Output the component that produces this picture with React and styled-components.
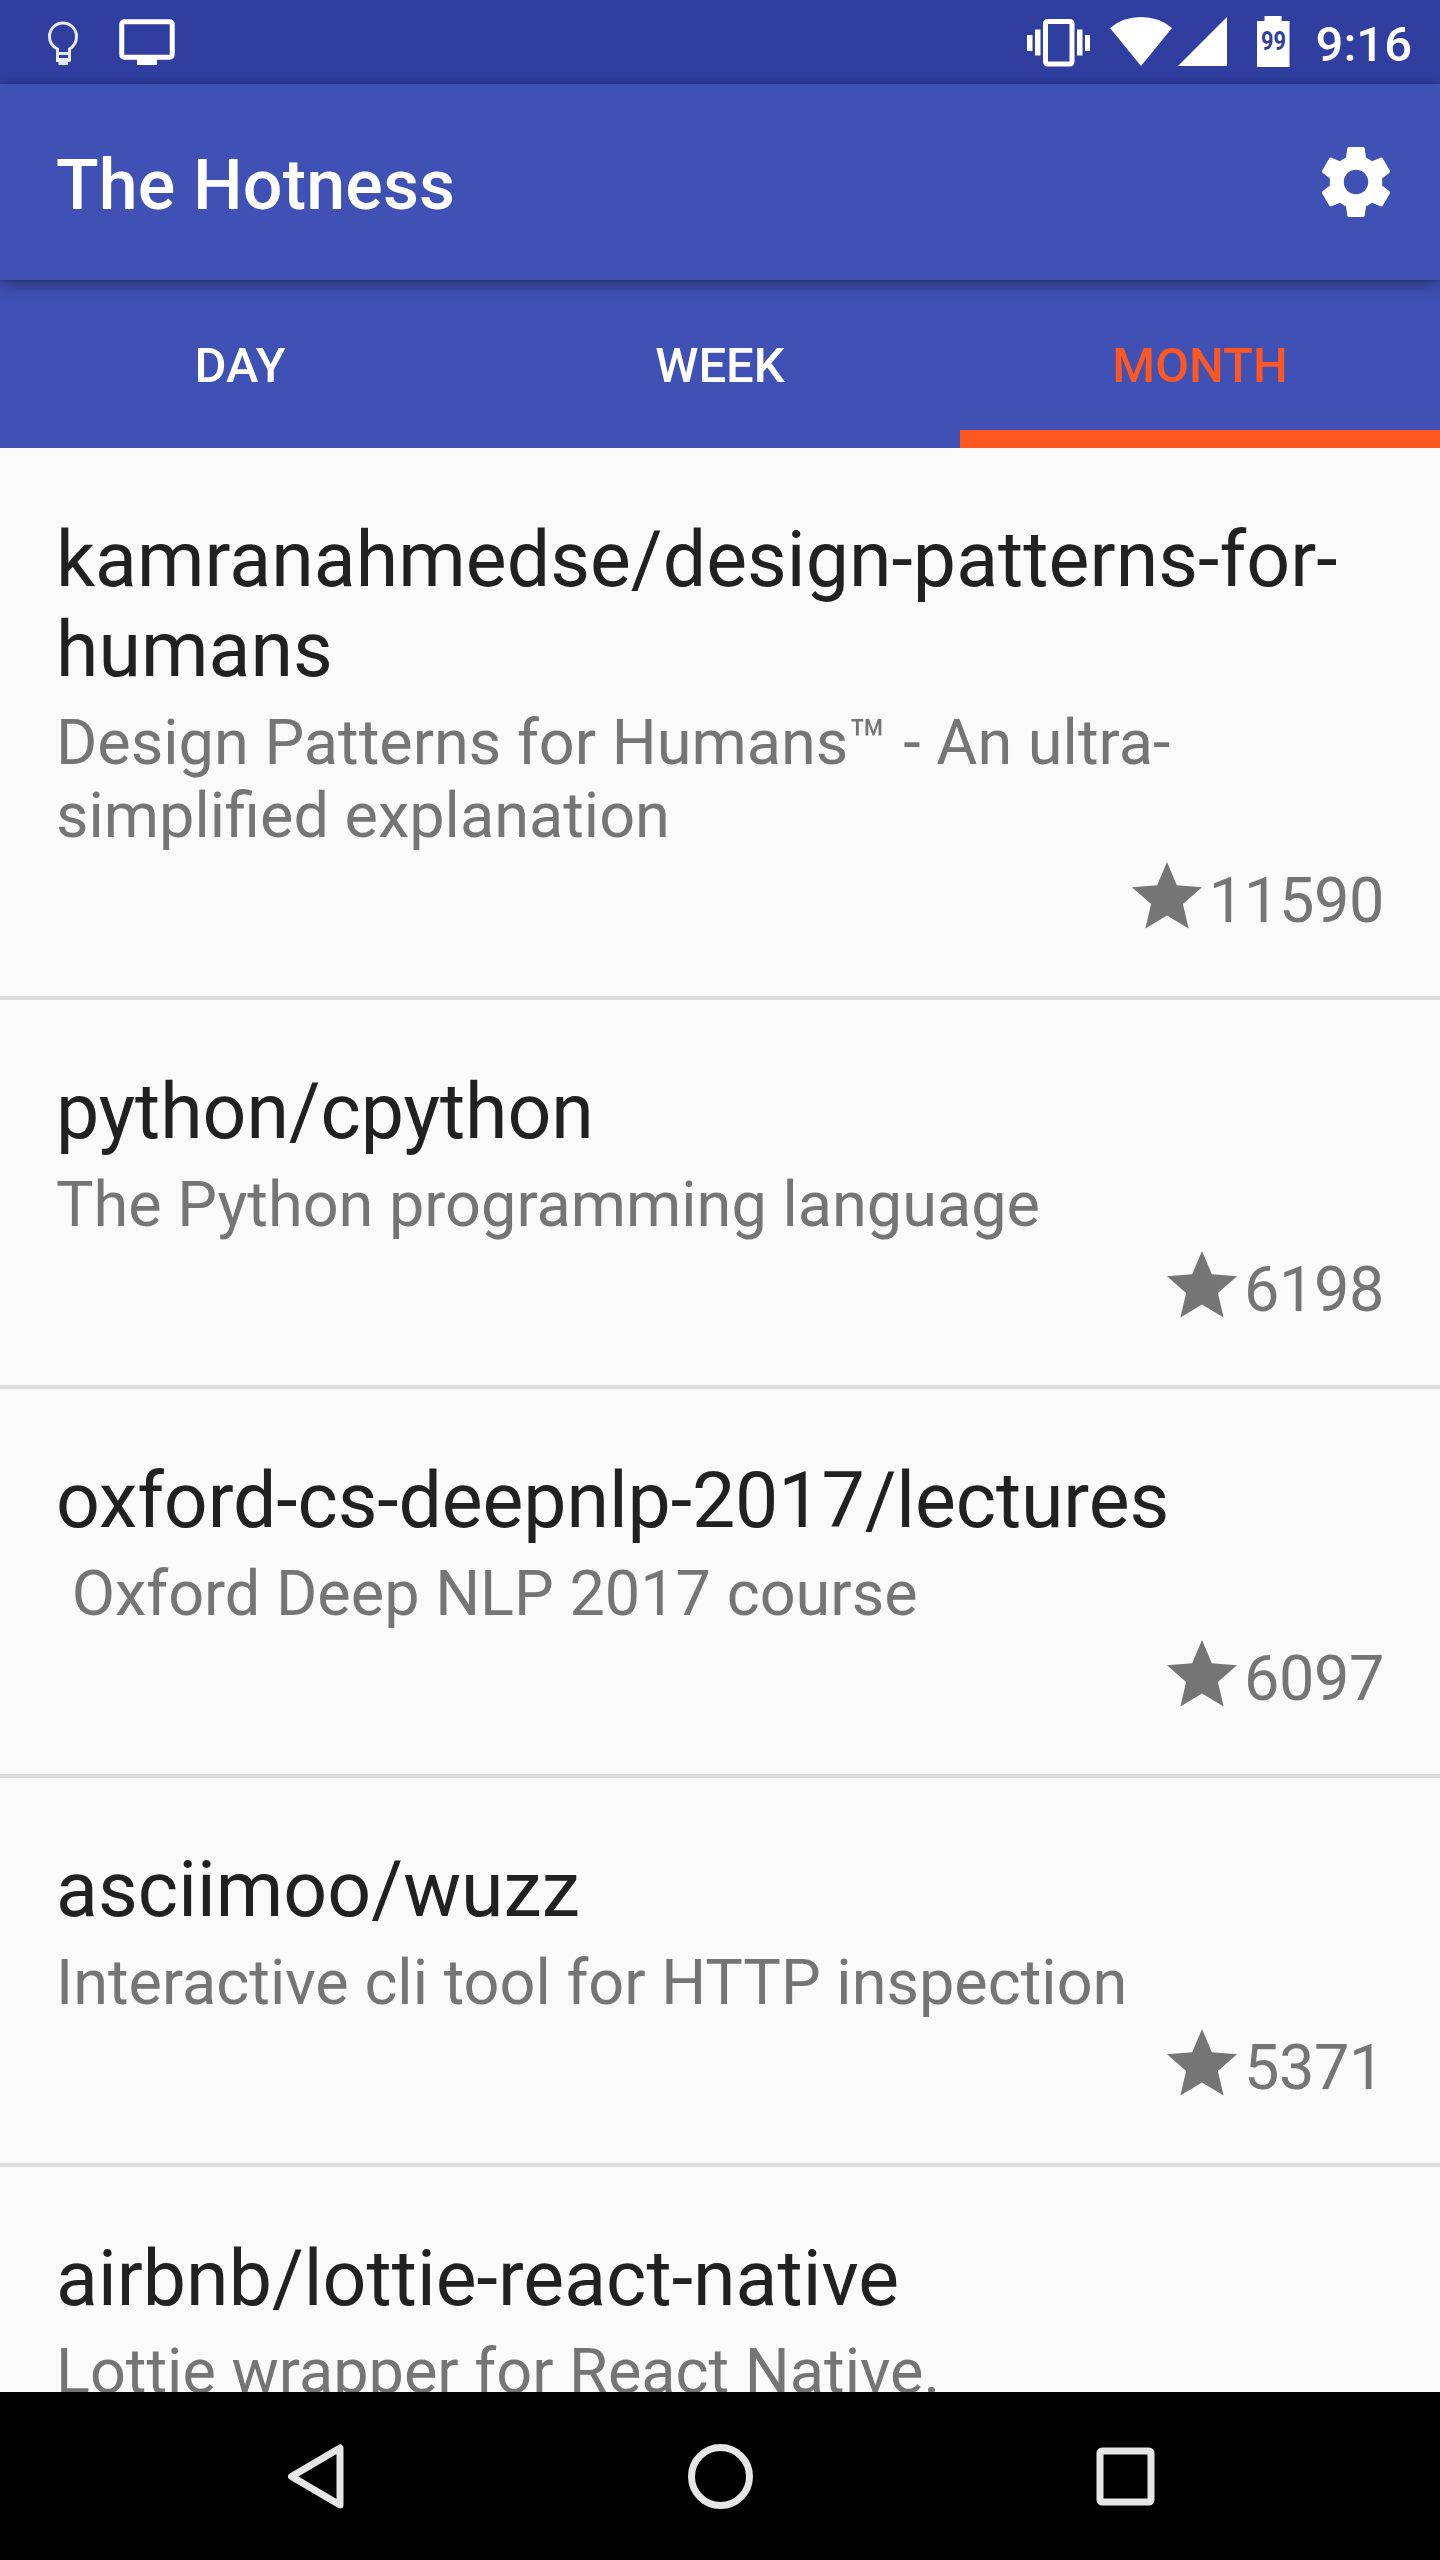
import React from "react";
import styled, { createGlobalStyle } from "styled-components";

const GlobalStyle = createGlobalStyle`
  *, *::before, *::after { box-sizing: border-box; }
  html, body { margin: 0; padding: 0; }
  body { background: #000; font-family: Roboto, "Noto Sans", sans-serif; }
`;

const Screen = styled.div`
  width: 1440px;
  height: 2560px;
  display: flex;
  flex-direction: column;
  overflow: hidden;
  background: #fafafa;
`;

const StatusBar = styled.header`
  flex: none;
  height: 84px;
  display: flex;
  align-items: flex-start;
  justify-content: space-between;
  padding: 0 28px 0 48px;
  background: #303f9f;
`;

const StatusGroup = styled.div`
  display: flex;
  align-items: flex-start;
`;

const Glyph = styled.svg`
  flex: none;
  display: block;
  width: ${(p) => p.$w}px;
  height: ${(p) => p.$h}px;
  margin-left: ${(p) => p.$ml || 0}px;
  margin-top: ${(p) => p.$mt || 0}px;
`;

const Battery = styled.div`
  width: 33px;
  height: 51px;
  margin: 16px 0 0 30px;
  padding-top: 5px;
  background: #fff;
  clip-path: polygon(0 5px, 8px 5px, 8px 0, 25px 0, 25px 5px, 33px 5px, 33px 51px, 0 51px);
`;

const BatteryLevel = styled.span`
  display: block;
  color: #303f9f;
  font-size: 25px;
  font-weight: 700;
  line-height: 42px;
  text-align: center;
  transform: scaleX(0.87);
`;

const Clock = styled.span`
  margin: 16px 0 0 26px;
  color: #fff;
  font-size: 49px;
  font-weight: 500;
  line-height: 58px;
`;

const Toolbar = styled.div`
  flex: none;
  position: relative;
  z-index: 1;
  height: 196px;
  display: flex;
  align-items: center;
  justify-content: space-between;
  padding: 0 42px 0 56px;
  background: #3f51b5;
  box-shadow: 0 5px 14px rgba(0, 0, 0, 0.36), 0 0 5px rgba(0, 0, 0, 0.16);
`;

const AppTitle = styled.h1`
  margin: 6px 0 0;
  color: #fff;
  font-size: 70px;
  font-weight: 500;
  line-height: 82px;
  letter-spacing: 0.15px;
`;

const Tabs = styled.nav`
  flex: none;
  height: 168px;
  display: grid;
  grid-template-columns: repeat(3, 1fr);
  background: #3f51b5;
`;

const Tab = styled.div`
  display: flex;
  align-items: center;
  justify-content: center;
  padding-top: ${(p) => (p.$active ? 21 : 3)}px;
  border-bottom: ${(p) => (p.$active ? "18px solid #ff5722" : "0")};
  color: ${(p) => (p.$active ? "#ff5722" : "#fff")};
  font-size: 49px;
  font-weight: 500;
  line-height: 58px;
`;

const List = styled.main`
  flex: 1;
  min-height: 0;
  overflow: hidden;
`;

const Item = styled.article`
  display: flex;
  flex-direction: column;
  padding: 67px 56px 53px;
  border-bottom: 4px solid #dcdcdc;
`;

const RepoName = styled.h2`
  margin: 0;
  color: #212121;
  font-size: 77px;
  font-weight: 400;
  line-height: 90px;
  letter-spacing: ${(p) => p.$tracking || 0}px;
`;

const Description = styled.p`
  margin: 11px 0 0;
  color: #757575;
  font-size: 63px;
  line-height: 73px;
  white-space: pre-wrap;
`;

const Stars = styled.div`
  display: flex;
  justify-content: flex-end;
  align-items: flex-start;
  height: 91px;
  padding-top: 12px;
  color: #757575;
  font-size: 63px;
  line-height: 73px;
  letter-spacing: -0.38px;
`;

const NavBar = styled.footer`
  flex: none;
  height: 168px;
  display: flex;
  align-items: center;
  justify-content: center;
  gap: 321px;
  background: #000;
`;

const tabs = ["DAY", "WEEK", "MONTH"];

const repos = [
  { name: "kamranahmedse/design-patterns-for-humans", tracking: 0.06, text: "Design Patterns for Humans™ - An ultra-simplified explanation", stars: 11590 },
  { name: "python/cpython", tracking: -0.07, text: "The Python programming language", stars: 6198 },
  { name: "oxford-cs-deepnlp-2017/lectures", tracking: -0.09, text: " Oxford Deep NLP 2017 course", stars: 6097 },
  { name: "asciimoo/wuzz", tracking: 0.07, text: "Interactive cli tool for HTTP inspection", stars: 5371 },
  { name: "airbnb/lottie-react-native", tracking: 0.04, text: "Lottie wrapper for React Native.", stars: 4970 },
];

const Bulb = () => (
  <Glyph $w={30} $h={44} $mt={21} viewBox="0 0 30 44" fill="none" stroke="#e8eaf6" strokeWidth="3">
    <path d="M9.500 40V28C4.500 25.500 1.500 21 1.500 15.500a13.500 13.500 0 0 1 27 0c0 5.500-3 10-7 12.500V40M9 32.500h13" />
    <path d="M8 37h14.500v4h-2.500v3h-9.500v-3H8z" fill="#e8eaf6" stroke="none" />
  </Glyph>
);

const Monitor = () => (
  <Glyph $w={56} $h={46} $ml={41} $mt={19} viewBox="0 0 56 46">
    <rect x="2.750" y="2.750" width="50.500" height="35.500" rx="2.500" fill="none" stroke="#fff" strokeWidth="5" />
    <path d="M18 40h20v6H18z" fill="#fff" />
  </Glyph>
);

const Vibrate = () => (
  <Glyph $w={63} $h={48} $mt={19} viewBox="0 0 63 48" fill="#fff">
    <rect x="18.500" y="2.500" width="26.500" height="42.500" rx="2" fill="none" stroke="#fff" strokeWidth="5" />
    <path d="M0 16h5.500v16H0zM8 10.500h5.500v26H8zM50 10.500h5.500v26H50zM58 16h5v16h-5z" />
  </Glyph>
);

const Wifi = () => (
  <Glyph $w={62} $h={49} $ml={20} $mt={17} viewBox="0 0 62 49" fill="#fff">
    <path d="M31 49L0 11Q13 0 31 0T62 11z" />
  </Glyph>
);

const Signal = () => (
  <Glyph $w={49} $h={49} $ml={6} $mt={17} viewBox="0 0 49 49" fill="#fff">
    <path d="M49 0v49H0z" />
  </Glyph>
);

const Gear = () => (
  <Glyph $w={84} $h={84} viewBox="0 0 24 24" fill="#fff">
    <path d="M19.430 12.980c.04-.32.07-.64.07-.98s-.03-.66-.07-.98l2.110-1.650c.19-.15.24-.42.12-.64l-2-3.460c-.12-.22-.39-.3-.61-.22l-2.490 1c-.52-.4-1.080-.73-1.690-.98l-.38-2.650C14.460 2.180 14.250 2 14 2h-4c-.25 0-.46.18-.49.42l-.38 2.650c-.61.25-1.170.59-1.690.98l-2.490-1c-.23-.09-.49 0-.61.22l-2 3.460c-.13.22-.07.49.12.64l2.110 1.650c-.04.32-.07.65-.07.98s.03.66.07.98l-2.110 1.650c-.19.15-.24.42-.12.64l2 3.460c.12.22.39.3.61.22l2.490-1c.52.4 1.080.73 1.690.98l.38 2.650c.03.24.24.42.49.42h4c.25 0 .46-.18.49-.42l.38-2.650c.61-.25 1.170-.59 1.690-.98l2.490 1c.23.09.49 0 .61-.22l2-3.460c.12-.22.07-.49-.12-.64l-2.110-1.650zM12 15.500c-1.930 0-3.500-1.570-3.500-3.500s1.570-3.500 3.500-3.500 3.500 1.570 3.500 3.500-1.570 3.500-3.500 3.500z" />
  </Glyph>
);

const Star = () => (
  <Glyph $w={84} $h={84} $mt={-9} viewBox="0 0 24 24" fill="#757575">
    <path d="M12 17.270L18.180 21l-1.640-7.030L22 9.240l-7.190-.61L12 2 9.190 8.630 2 9.240l5.460 4.730L5.820 21z" />
  </Glyph>
);

export default function App() {
  return (
    <>
      <GlobalStyle />
      <Screen>
        <StatusBar>
          <StatusGroup>
            <Bulb />
            <Monitor />
          </StatusGroup>
          <StatusGroup>
            <Vibrate />
            <Wifi />
            <Signal />
            <Battery>
              <BatteryLevel>99</BatteryLevel>
            </Battery>
            <Clock>9:16</Clock>
          </StatusGroup>
        </StatusBar>
        <Toolbar>
          <AppTitle>The Hotness</AppTitle>
          <Gear />
        </Toolbar>
        <Tabs>
          {tabs.map((t) => (
            <Tab key={t} $active={t === "MONTH"}>{t}</Tab>
          ))}
        </Tabs>
        <List>
          {repos.map((r) => (
            <Item key={r.name}>
              <RepoName $tracking={r.tracking}>{r.name}</RepoName>
              <Description>{r.text}</Description>
              <Stars>
                <Star />
                <span>{r.stars}</span>
              </Stars>
            </Item>
          ))}
        </List>
        <NavBar>
          <Glyph $w={84} $h={84} viewBox="0 0 84 84" fill="none" stroke="#e6e6e6" strokeWidth="7" strokeLinejoin="round">
            <path d="M67 14v57L18.500 42.500z" />
          </Glyph>
          <Glyph $w={84} $h={84} viewBox="0 0 84 84" fill="none" stroke="#e6e6e6" strokeWidth="7">
            <circle cx="42.500" cy="42.500" r="29" />
          </Glyph>
          <Glyph $w={84} $h={84} viewBox="0 0 84 84" fill="none" stroke="#e6e6e6" strokeWidth="7">
            <rect x="17" y="17" width="51" height="51" rx="2" />
          </Glyph>
        </NavBar>
      </Screen>
    </>
  );
}
